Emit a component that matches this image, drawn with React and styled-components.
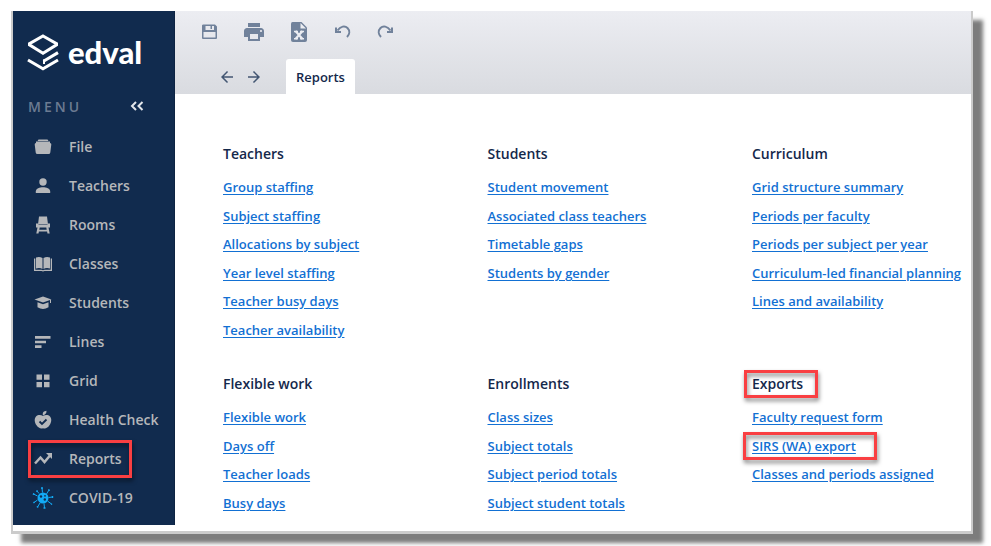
import React from 'react';
import styled, { createGlobalStyle, css } from 'styled-components';
import { MdPrint, MdArrowBack, MdArrowForward } from 'react-icons/md';

const GlobalStyle = createGlobalStyle`
  * {
    box-sizing: border-box;
  }

  body {
    margin: 0;
    background: #fff;
    font-family: 'Open Sans', 'Noto Sans', sans-serif;
    font-size: 14px;
    font-weight: 600;
  }
`;

const Page = styled.div`
  display: flex;
  min-height: 100vh;
  padding: 11px 18px 12px 11px;
`;

const Window = styled.div`
  flex: 1;
  display: flex;
  padding-bottom: 6px;
  background: #fff;
  border: 2px solid #cbcbcb;
  border-top: 0;
  border-bottom-width: 3px;
  box-shadow: 10px 9px 4px #7c7c7c;
`;

const Sidebar = styled.aside`
  flex: 0 0 162px;
  background: #112b4e;
  border-right: 1px solid #0d2342;
`;

const Logo = styled.div`
  display: flex;
  align-items: center;
  gap: 9px;
  height: 84px;
  padding-left: 14px;
`;

const Wordmark = styled.span`
  padding-bottom: 2px;
  color: #fff;
  font-family: Lato, sans-serif;
  font-size: 31px;
  font-weight: 900;
`;

const MenuHeader = styled.div`
  display: flex;
  align-items: center;
  justify-content: space-between;
  height: 22px;
  padding: 0 30px 0 15px;
  color: #6c7b92;
  letter-spacing: 3px;
`;

const IconButton = styled.button`
  display: flex;
  align-items: center;
  justify-content: center;
  width: ${({ $width }) => $width || 24}px;
  padding: 0;
  border: 0;
  background: none;
  color: ${({ $color }) => $color || '#71829b'};
  cursor: pointer;
`;

const highlight = css`
  position: relative;

  &::after {
    content: '';
    position: absolute;
    inset: ${({ $inset }) => $inset};
    border: 3px solid #f93f42;
    filter: drop-shadow(1px 3px 2px rgba(0, 0, 0, 0.5));
    pointer-events: none;
  }
`;

const NavList = styled.nav`
  display: flex;
  flex-direction: column;
  padding-top: 10px;
`;

const NavItem = styled.a`
  display: flex;
  align-items: center;
  gap: 14px;
  height: 39px;
  padding-left: 18px;
  color: #b5b7ba;
  text-decoration: none;
  white-space: nowrap;

  svg {
    flex: none;
  }

  ${({ $inset }) => $inset && highlight}
`;

const Main = styled.main`
  flex: 1;
  min-width: 0;
`;

const Header = styled.header`
  display: flex;
  flex-direction: column;
  justify-content: space-between;
  height: 83px;
  background: linear-gradient(#ecedf2, #d9dbe0);
`;

const Toolbar = styled.div`
  display: flex;
  align-items: center;
  gap: 20px;
  height: 41px;
  padding-left: 23px;
`;

const TabBar = styled.div`
  display: flex;
  align-items: stretch;
  height: 35px;
  padding-left: 39px;
`;

const History = styled.div`
  display: flex;
  gap: 2px;
  margin-right: 20px;
`;

const Tab = styled.button`
  padding: 0 10px;
  border: 0;
  border-radius: 3px 3px 0 0;
  background: #fff;
  color: #14284b;
  font: inherit;
  font-size: 13px;
`;

const Groups = styled.div`
  display: grid;
  grid-template-columns: 1fr 1fr 219px;
  row-gap: 30px;
  padding: 50px 0 0 48px;
`;

const Title = styled.h2`
  margin: 0 0 9px;
  color: #14284b;
  font-size: 14px;
  font-weight: 600;
  line-height: 20px;

  span {
    ${({ $inset }) => $inset && highlight}
  }
`;

const LinkList = styled.ul`
  margin: 0;
  padding: 0;
  list-style: none;
  font-size: 13px;
  line-height: 28px;
  white-space: nowrap;

  li:nth-child(odd) {
    line-height: 29px;
  }
`;

const ReportLink = styled.a`
  color: #1270d3;
  text-decoration: underline;
  text-underline-offset: 2px;

  ${({ $inset }) => $inset && highlight}
`;

const Glyph = ({ children }) => (
  <svg width="24" height="24" viewBox="0 0 24 24" fill="currentColor" aria-hidden="true">
    {children}
  </svg>
);

const LogoMark = () => (
  <svg width="32" height="38" viewBox="0 0 32 38" fill="none" stroke="#fff" strokeWidth="3" aria-hidden="true">
    <path d="M16 2 29.500 9.700v1.200L16 19.200 2.500 10.900V9.700Z" />
    <path d="M1 26 16 34.800 31 26M16.500 27.300 31 18.600" />
    <path d="M17 30V25.500" strokeWidth="2" />
  </svg>
);

const CollapseIcon = () => (
  <svg width="14" height="10" viewBox="0 0 14 10" fill="none" stroke="currentColor" strokeWidth="2" aria-hidden="true">
    <path d="M6 1 2 5l4 4M12.500 1l-4 4 4 4" />
  </svg>
);

const FileIcon = () => (
  <Glyph>
    <path d="M7.500 4.500h9l1 1.500h-11zM5 6.500h14v1.500H5z" />
    <path d="M5 8h14q1.500 0 1.300 1.500l-1 8q-.2 1.500-1.700 1.500H6.400q-1.500 0-1.700-1.500l-1-8Q3.500 8 5 8Z" />
  </Glyph>
);

const PersonIcon = () => (
  <Glyph>
    <circle cx="12" cy="8" r="3.700" />
    <path d="M4.800 19v-1.500c0-3 4-4.300 7.200-4.300s7.200 1.300 7.200 4.300V19z" />
  </Glyph>
);

const ChairIcon = () => (
  <Glyph>
    <path d="M8 3.500h8l1 8H7z" />
    <path d="M5 10.500h2.500v1.500h9v-1.500H19v4h-1.500l1.200 6h-2.200l-.4-2H7.900l-.4 2H5.300l1.200-6H5zM8.700 14.500l-.4 2.300h7.400l-.4-2.300z" fillRule="evenodd" />
  </Glyph>
);

const BookIcon = () => (
  <Glyph>
    <path d="M5 5.500q3.500-1.200 6.500.5v11q-2.500-1.500-6.500-.5zM12.500 6q3-1.700 6.500-.5v11q-4-1-6.500.5z" />
    <path d="M3 6.500h1.300v11.200h6.200l1.500.6 1.500-.6h6.200V6.500H21V19h-7.500l-1.500.6-1.500-.6H3z" />
  </Glyph>
);

const CapIcon = () => (
  <Glyph>
    <path d="M12 5.500 20.500 8.500 12 11.500 3.500 8.500z" />
    <path d="M6.500 11.300l5.500 2 5.500-2v5q-5.500 3.500-11 0zM19 9h1v3h-1z" />
  </Glyph>
);

const LinesIcon = () => (
  <Glyph>
    <path d="M4 6h15.500v2.700H4zM4 10.700h11v2.600H4zM4 15.300h6.500V18H4z" />
  </Glyph>
);

const GridIcon = () => (
  <Glyph>
    <path d="M5.500 5.500H11v5.300H5.500zM13 5.500h5.500v5.300H13zM5.500 13H11v5.300H5.500zM13 13h5.500v5.300H13z" />
  </Glyph>
);

const AppleIcon = () => (
  <Glyph>
    <path d="M12 7.500C11 4.500 13 3 15.500 2.800 15.800 5.500 14 6.500 12 7.500Z" />
    <path d="M12 8c2-1.200 5-1.500 7 .5 2 2.200 1.500 6-.5 8.800-2 2.700-4 3.700-6.500 2.900-2.500.8-4.500-.2-6.500-2.900-2-2.800-2.500-6.600-.5-8.800 2-2 5-1.700 7-.5Z" />
    <path d="m8.500 13.500 2.500 2.500 4.500-4.500" fill="none" stroke="#112b4e" strokeWidth="1.800" />
  </Glyph>
);

const TrendIcon = () => (
  <Glyph>
    <path d="m4 16.500 5.500-6 4 4.500 5.500-6.500" fill="none" stroke="currentColor" strokeWidth="2.500" />
    <path d="M15 6h6v6z" />
  </Glyph>
);

const VirusIcon = () => (
  <svg width="24" height="24" viewBox="0 0 24 24" fill="#12aaf5" stroke="#12aaf5" aria-hidden="true">
    <circle cx="12" cy="12" r="5.500" stroke="none" />
    <path d="M11.500 6.500 11 2M15.500 8l2.500-4M17.500 11.500l4-.5M16.500 15l4 3M13 17.500l.5 4.500M9 17l-2.500 4M6.500 14 3 16.500M6.500 10 2.500 8M8 7.500 6 5" strokeWidth="1" />
    <path d="M10 2h2M17.300 3.500l1.500 1M21.500 10v2M20.200 18.700l.7-1M12.500 22h2M5.800 20.500l1.500.8M2.600 15.800l.8 1.200M2.200 8.800l.7-1.500M5.300 5.500l1.300-1" strokeWidth="1.400" />
    <g fill="#112b4e" stroke="none">
      <circle cx="10" cy="10.500" r="1.200" />
      <circle cx="14" cy="9.800" r=".9" />
      <circle cx="13.800" cy="13.500" r="1.200" />
    </g>
  </svg>
);

const SaveIcon = () => (
  <Glyph>
    <path d="M5.500 4.500H17L19 6.500v11.500q0 1-1 1H5q-1 0-1-1V5.500q0-1 1.500-1ZM7.500 6v4h8.500V6zM5.500 12v5.500h12V12z" fillRule="evenodd" />
    <path d="M12.500 6h1.500v3h-1.500z" />
  </Glyph>
);

const ExcelIcon = () => (
  <Glyph>
    <path d="M6.500 2h9L21 7.500V20q0 2-2 2H7q-2 0-2-2V4q0-2 1.500-2z" />
    <path d="M14.500 3v5.500H20z" fill="#ecedf2" />
    <path d="m9.500 11 7 8M16.500 11l-7 8" fill="none" stroke="#ecedf2" strokeWidth="2.200" />
    <path d="M8 11.500h4M14 11.500h4M8 18.800h4M14 18.800h4" stroke="#ecedf2" strokeWidth="1.600" />
  </Glyph>
);

const UndoIcon = ({ flip }) => (
  <svg width="18" height="16" viewBox="0 0 18 16" fill="none" stroke="currentColor" strokeWidth="2" aria-hidden="true">
    <g transform={flip ? 'translate(17 0) scale(-1 1)' : 'translate(1 0)'}>
      <path d="M3.500 6.500C6.500 2 11 1.500 13.500 4c2.800 2.800 2 6.500-.5 9" />
      <path d="M2 3.500V8h5" />
    </g>
  </svg>
);

const navItems = [
  { label: 'File', icon: <FileIcon /> },
  { label: 'Teachers', icon: <PersonIcon /> },
  { label: 'Rooms', icon: <ChairIcon /> },
  { label: 'Classes', icon: <BookIcon /> },
  { label: 'Students', icon: <CapIcon /> },
  { label: 'Lines', icon: <LinesIcon /> },
  { label: 'Grid', icon: <GridIcon /> },
  { label: 'Health Check', icon: <AppleIcon /> },
  { label: 'Reports', icon: <TrendIcon />, inset: '1px 42px 0 15px' },
  { label: 'COVID-19', icon: <VirusIcon /> },
];

const groups = [
  {
    title: 'Teachers',
    links: ['Group staffing', 'Subject staffing', 'Allocations by subject', 'Year level staffing', 'Teacher busy days', 'Teacher availability'],
  },
  {
    title: 'Students',
    links: ['Student movement', 'Associated class teachers', 'Timetable gaps', 'Students by gender'],
  },
  {
    title: 'Curriculum',
    links: ['Grid structure summary', 'Periods per faculty', 'Periods per subject per year', 'Curriculum-led financial planning', 'Lines and availability'],
  },
  {
    title: 'Flexible work',
    links: ['Flexible work', 'Days off', 'Teacher loads', 'Busy days'],
  },
  {
    title: 'Enrollments',
    links: ['Class sizes', 'Subject totals', 'Subject period totals', 'Subject student totals'],
  },
  {
    title: 'Exports',
    inset: '-4px -15px -5px -8px',
    links: ['Faculty request form', 'SIRS (WA) export', 'Classes and periods assigned'],
    marked: 'SIRS (WA) export',
  },
];

const App = () => {
  return (
    <>
      <GlobalStyle />
      <Page>
        <Window>
          <Sidebar>
            <Logo>
              <LogoMark />
              <Wordmark>edval</Wordmark>
            </Logo>
            <MenuHeader>
              MENU
              <IconButton $width={14} $color="#e3e6ea" aria-label="Collapse menu">
                <CollapseIcon />
              </IconButton>
            </MenuHeader>
            <NavList>
              {navItems.map(({ label, icon, inset }) => (
                <NavItem key={label} href="#" $inset={inset}>
                  {icon}
                  {label}
                </NavItem>
              ))}
            </NavList>
          </Sidebar>
          <Main>
            <Header>
              <Toolbar>
                <IconButton aria-label="Save"><SaveIcon /></IconButton>
                <IconButton aria-label="Print"><MdPrint size={24} /></IconButton>
                <IconButton aria-label="Export to Excel"><ExcelIcon /></IconButton>
                <IconButton aria-label="Undo"><UndoIcon /></IconButton>
                <IconButton aria-label="Redo"><UndoIcon flip /></IconButton>
              </Toolbar>
              <TabBar>
                <History>
                  <IconButton $width={25} $color="#435672" aria-label="Back"><MdArrowBack size={18} /></IconButton>
                  <IconButton $width={25} $color="#435672" aria-label="Forward"><MdArrowForward size={18} /></IconButton>
                </History>
                <Tab>Reports</Tab>
              </TabBar>
            </Header>
            <Groups>
              {groups.map(({ title, inset, links, marked }) => (
                <section key={title}>
                  <Title $inset={inset}><span>{title}</span></Title>
                  <LinkList>
                    {links.map((link) => (
                      <li key={link}>
                        <ReportLink href="#" $inset={link === marked && '-5px -21px -5px -9px'}>
                          {link}
                        </ReportLink>
                      </li>
                    ))}
                  </LinkList>
                </section>
              ))}
            </Groups>
          </Main>
        </Window>
      </Page>
    </>
  );
};

export default App;
